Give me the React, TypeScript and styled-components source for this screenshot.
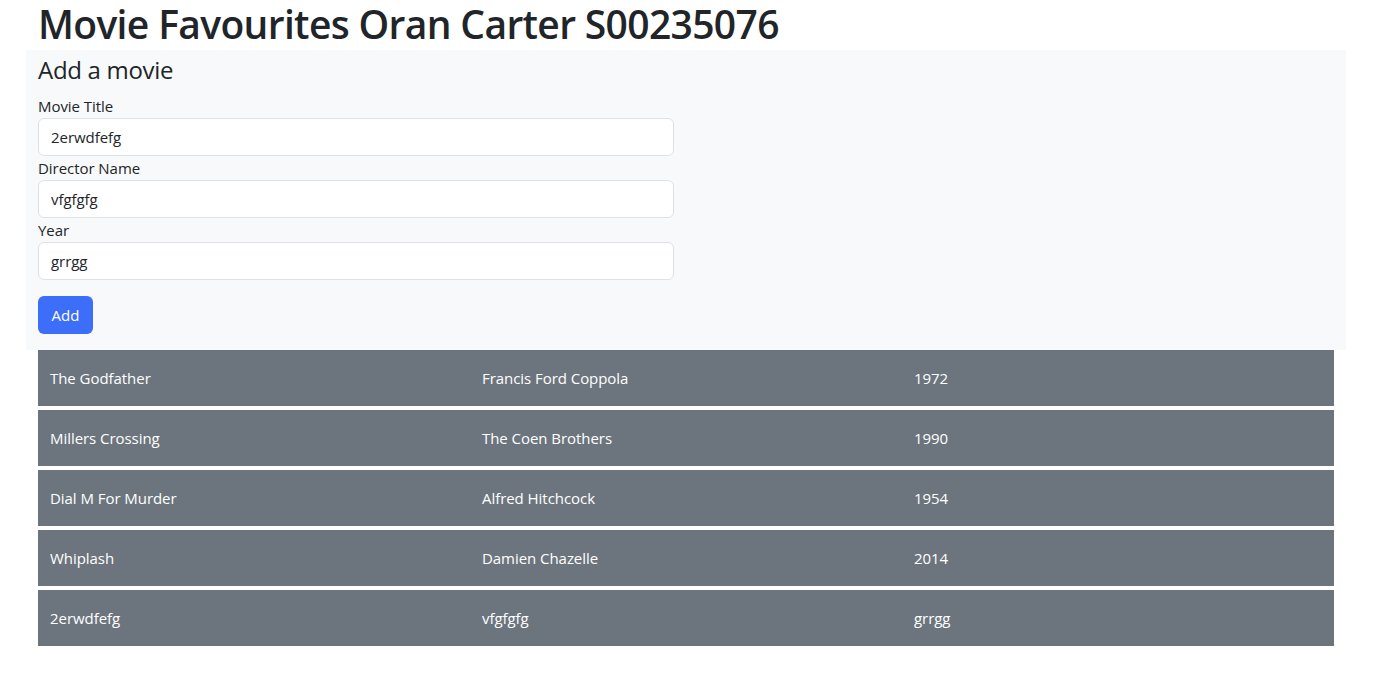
import React from "react";
import styled, { createGlobalStyle } from "styled-components";

const Global = createGlobalStyle`
  * { box-sizing: border-box; }
  body {
    margin: 0;
    background: #ffffff;
    color: #212529;
    font-family: "Open Sans", "Noto Sans", sans-serif;
    font-size: 16px;
    line-height: 1.5;
  }
`;

const Page = styled.div`
  width: 1320px;
  margin-left: 26px;
`;

const Title = styled.h1`
  margin: 0;
  padding: 2px 12px 0;
  height: 50px;
  font-size: 39px;
  font-weight: 600;
  line-height: 44px;
  letter-spacing: -0.65px;
  color: #212529;
`;

const Panel = styled.section`
  background: #f8f9fa;
  padding: 0 12px 16px;
`;

const PanelTitle = styled.h3`
  margin: 0 0 8px;
  padding-top: 4px;
  font-size: 24px;
  font-weight: 400;
  line-height: 32px;
  letter-spacing: -0.3px;
`;

const Field = styled.div`
  display: flex;
  flex-direction: column;
  width: 636px;
`;

const Label = styled.label`
  font-size: 15px;
  line-height: 24px;
  letter-spacing: -0.05px;
`;

const Input = styled.input`
  height: 38px;
  padding: 6px 12px;
  font-family: inherit;
  font-size: 15px;
  letter-spacing: -0.05px;
  color: #212529;
  background: #ffffff;
  border: 1px solid #dee2e6;
  border-radius: 6px;
  outline: none;
`;

const Button = styled.button`
  margin-top: 16px;
  height: 38px;
  width: 55px;
  padding: 0;
  font-family: inherit;
  font-size: 15px;
  color: #ffffff;
  background: #3c6ef9;
  border: none;
  border-radius: 6px;
`;

const Table = styled.div`
  display: flex;
  flex-direction: column;
  gap: 4px;
  margin: 0 12px;
`;

const Row = styled.div`
  display: grid;
  grid-template-columns: repeat(3, 1fr);
  height: 56px;
  align-items: center;
  background: #6c757d;
  color: #ffffff;
`;

const Cell = styled.div`
  padding: 0 12px;
  font-size: 15px;
  letter-spacing: -0.05px;
`;

const movies = [
  ["The Godfather", "Francis Ford Coppola", "1972"],
  ["Millers Crossing", "The Coen Brothers", "1990"],
  ["Dial M For Murder", "Alfred Hitchcock", "1954"],
  ["Whiplash", "Damien Chazelle", "2014"],
  ["2erwdfefg", "vfgfgfg", "grrgg"],
];

export default function App() {
  return (
    <>
      <Global />
      <Page>
        <Title>Movie Favourites Oran Carter S00235076</Title>
        <Panel>
          <PanelTitle>Add a movie</PanelTitle>
          <Field>
            <Label>Movie Title</Label>
            <Input defaultValue="2erwdfefg" />
          </Field>
          <Field>
            <Label>Director Name</Label>
            <Input defaultValue="vfgfgfg" />
          </Field>
          <Field>
            <Label>Year</Label>
            <Input defaultValue="grrgg" />
          </Field>
          <Button>Add</Button>
        </Panel>
        <Table>
          {movies.map((m, i) => (
            <Row key={i}>
              {m.map((c, j) => (
                <Cell key={j}>{c}</Cell>
              ))}
            </Row>
          ))}
        </Table>
      </Page>
    </>
  );
}
